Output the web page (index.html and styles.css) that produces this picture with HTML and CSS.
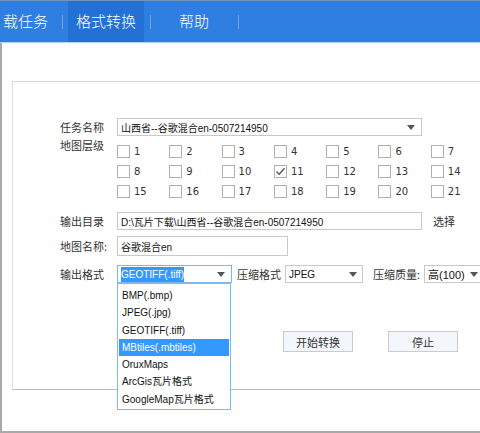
FILE: index.html
```html
<!DOCTYPE html>
<html lang="zh-CN">
<head>
<meta charset="utf-8">
<title>格式转换</title>
<link rel="stylesheet" href="styles.css">
</head>
<body>
<div class="window">
  <nav class="tabs">
    <div class="tab first">载任务</div>
    <span class="sep"></span>
    <div class="tab active">格式转换</div>
    <span class="sep"></span>
    <div class="tab">帮助</div>
    <span class="sep"></span>
  </nav>
  <div class="content">
    <section class="panel">
      <div class="row row-task">
        <div class="label">任务名称</div>
        <div class="select select-task">
          <span class="val">山西省--谷歌混合en-0507214950</span>
          <span class="arrow"></span>
        </div>
      </div>
      <div class="row row-levels">
        <div class="label label-top">地图层级</div>
        <div class="levels">
          <label class="cb"><span class="box"></span>1</label>
          <label class="cb"><span class="box"></span>2</label>
          <label class="cb"><span class="box"></span>3</label>
          <label class="cb"><span class="box"></span>4</label>
          <label class="cb"><span class="box"></span>5</label>
          <label class="cb"><span class="box"></span>6</label>
          <label class="cb"><span class="box"></span>7</label>
          <label class="cb"><span class="box"></span>8</label>
          <label class="cb"><span class="box"></span>9</label>
          <label class="cb"><span class="box"></span>10</label>
          <label class="cb"><span class="box checked"><svg viewBox="0 0 13 13" width="13" height="13"><path d="M2.5 6.5 L5.2 9.2 L10.5 3.2" fill="none" stroke="#555" stroke-width="1.3"/></svg></span>11</label>
          <label class="cb"><span class="box"></span>12</label>
          <label class="cb"><span class="box"></span>13</label>
          <label class="cb"><span class="box"></span>14</label>
          <label class="cb"><span class="box"></span>15</label>
          <label class="cb"><span class="box"></span>16</label>
          <label class="cb"><span class="box"></span>17</label>
          <label class="cb"><span class="box"></span>18</label>
          <label class="cb"><span class="box"></span>19</label>
          <label class="cb"><span class="box"></span>20</label>
          <label class="cb"><span class="box"></span>21</label>
        </div>
      </div>
      <div class="row row-dir">
        <div class="label">输出目录</div>
        <div class="input input-dir">D:\瓦片下载\山西省--谷歌混合en-0507214950</div>
        <div class="choose">选择</div>
      </div>
      <div class="row row-name">
        <div class="label">地图名称:</div>
        <div class="input input-name">谷歌混合en</div>
      </div>
      <div class="row row-format">
        <div class="label">输出格式</div>
        <div class="format-wrap">
          <div class="select select-format focused">
            <span class="val"><span class="hl">GEOTIFF(.tiff)</span></span>
            <span class="arrow"></span>
          </div>
          <ul class="dropdown">
            <li>BMP(.bmp)</li>
            <li>JPEG(.jpg)</li>
            <li>GEOTIFF(.tiff)</li>
            <li class="sel">MBtiles(.mbtiles)</li>
            <li>OruxMaps</li>
            <li>ArcGis瓦片格式</li>
            <li>GoogleMap瓦片格式</li>
          </ul>
        </div>
        <div class="inline-label">压缩格式</div>
        <div class="select select-jpeg">
          <span class="val">JPEG</span>
          <span class="arrow"></span>
        </div>
        <div class="inline-label ql">压缩质量:</div>
        <div class="select select-quality">
          <span class="val">高(100)</span>
          <span class="arrow"></span>
        </div>
      </div>
      <div class="row row-buttons">
        <button class="btn">开始转换</button>
        <button class="btn">停止</button>
      </div>
    </section>
  </div>
</div>
</body>
</html>
```

FILE: styles.css
```css
* { box-sizing: border-box; }
html, body { margin: 0; padding: 0; background: #fff; }
body {
  font-family: "Liberation Sans", "Noto Sans CJK SC", sans-serif;
  font-size: 11px;
  color: #222;
}
.window {
  width: 480px;
  height: 433px;
  overflow: hidden;
  display: flex;
  flex-direction: column;
}
.tabs {
  flex: none;
  height: 43px;
  background: #2e7fe1;
  border-top: 1px solid #6f93c0;
  border-bottom: 1px solid #b4d2f3;
  display: flex;
  align-items: center;
  font-family: "Noto Sans CJK SC", sans-serif;
  font-size: 15px;
  font-weight: 300;
  color: #fff;
}
.tab {
  height: 41px;
  line-height: 40px;
  width: 76px;
  text-align: center;
  margin: 0 6px 0 5px;
}
.tab.first {
  width: 62px;
  margin: 0;
  text-align: left;
  padding-left: 3px;
}
.tab.active { background: #2471d6; }
.sep {
  width: 1px;
  height: 14px;
  background: #6ea6ea;
}
.content {
  flex: 1;
  border-left: 2px solid #a9a9a9;
  border-bottom: 2px solid #a9a9a9;
  padding: 38px 0 0 10px;
}
.panel {
  width: 520px;
  height: 309px;
  border: 1px solid #d3dae1;
  border-bottom-color: #bdbdbd;
  border-left-color: #dcdcdc;
  padding: 36px 0 0 47px;
}
.row {
  display: flex;
  align-items: center;
}
.label {
  width: 57px;
  flex: none;
  font-family: "Noto Sans CJK SC", sans-serif;
  color: #333;
}
.row-task { height: 18px; }
.select {
  position: relative;
  height: 18px;
  border: 1px solid #c9c9c9;
  background: #fff;
  display: flex;
  align-items: center;
  padding-left: 3px;
  font-family: "Liberation Sans", "Noto Sans CJK SC", sans-serif;
  font-size: 10px;
  color: #111;
  white-space: nowrap;
}
.arrow {
  position: absolute;
  top: 6px;
  width: 0;
  height: 0;
  border-left: 4px solid transparent;
  border-right: 4px solid transparent;
  border-top: 5px solid #555;
}
.select-task { width: 305px; }
.select-task .arrow { right: 6px; }
.row-levels {
  margin-top: 5px;
  align-items: flex-start;
}
.label-top { line-height: 16px; margin-top: -4px; }
.levels {
  display: grid;
  grid-template-columns: repeat(7, 52.3px);
  grid-auto-rows: 20px;
}
.cb {
  display: flex;
  align-items: center;
  gap: 4px;
  font-family: "DejaVu Sans", sans-serif;
  font-size: 10px;
  color: #333;
}
.box {
  width: 13px;
  height: 13px;
  border: 1px solid #b0b0b0;
  background: #fff;
  flex: none;
  position: relative;
}
.box svg { position: absolute; left: -1px; top: -1px; }
.row-dir { margin-top: 11px; height: 18px; }
.input {
  height: 18px;
  border: 1px solid #c9c9c9;
  background: #fff;
  padding-left: 3px;
  display: flex;
  align-items: center;
  font-size: 10px;
  color: #111;
  white-space: nowrap;
}
.input-dir { width: 305px; }
.choose {
  margin-left: 11px;
  font-family: "Noto Sans CJK SC", sans-serif;
  color: #333;
}
.row-name { margin-top: 6px; height: 20px; }
.input-name { width: 171px; height: 20px; }
.row-format { margin-top: 9px; height: 18px; }
.format-wrap { position: relative; }
.select-format { width: 115px; }
.select.focused { border-color: #7fb6ea; }
.select-format .arrow { right: 6px; }
.hl {
  background: #3399ff;
  color: #fff;
  padding: 2px 0;
}
.dropdown {
  position: absolute;
  left: 0;
  top: 18px;
  width: 114px;
  height: 127px;
  margin: 0;
  padding: 3px 1px;
  list-style: none;
  background: #fff;
  border: 1px solid #7cbde8;
  font-size: 10px;
  color: #111;
  z-index: 2;
}
.dropdown li {
  height: 17.3px;
  line-height: 17.3px;
  padding-left: 3px;
  white-space: nowrap;
}
.dropdown li.sel { background: #3399ff; color: #fff; }
.inline-label {
  margin-left: 5px;
  margin-right: 4px;
  font-family: "Noto Sans CJK SC", sans-serif;
  color: #333;
}
.inline-label.ql { margin-left: 10px; }
.select-jpeg { width: 78px; }
.select-jpeg .arrow { right: 5px; }
.select-quality { width: 62px; font-size: 11px; }
.select-quality .arrow { right: 7px; }
.row-buttons {
  margin-top: 48px;
  padding-left: 223px;
  gap: 35px;
}
.btn {
  width: 70px;
  height: 21px;
  border: 1px solid #c6cbd1;
  background: #f3f6fa;
  font-family: "Noto Sans CJK SC", sans-serif;
  font-size: 11px;
  color: #333;
  padding: 0;
}
```
